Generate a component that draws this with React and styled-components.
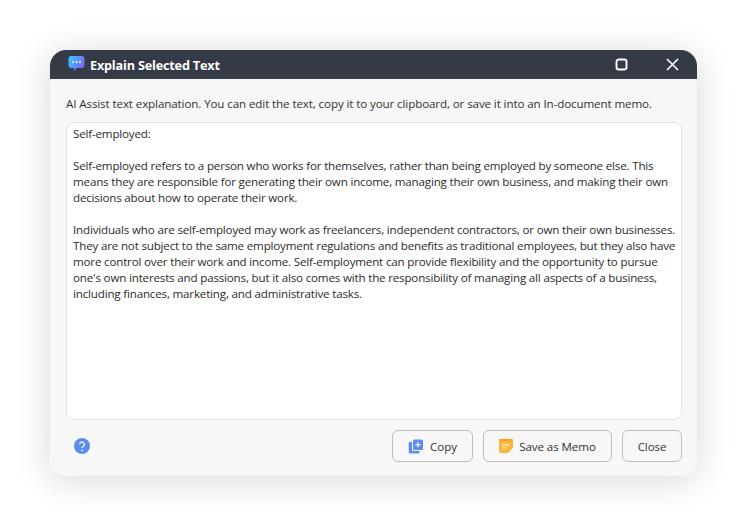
import React from 'react';
import styled, { createGlobalStyle } from 'styled-components';

const Global = createGlobalStyle`
  html, body { margin: 0; background: #fff; }
  * { box-sizing: border-box; }
`;

const Page = styled.div`
  width: 747px;
  height: 526px;
  padding: 50px;
  overflow: hidden;
  font-family: "Open Sans", "Noto Sans", sans-serif;
`;

const Dialog = styled.section`
  width: 647px;
  height: 426px;
  display: flex;
  flex-direction: column;
  background: #f7f7f7;
  border-radius: 16px;
  overflow: hidden;
  box-shadow: 0 4px 36px rgba(0, 0, 0, 0.16);
`;

const TitleBar = styled.header`
  height: 29px;
  flex: none;
  display: flex;
  align-items: center;
  padding: 0 18px;
  background: #343a46;
  color: #fff;
`;

const Title = styled.h1`
  margin: 0 0 0 5px;
  font-size: 12.7px;
  font-weight: 700;
  letter-spacing: -0.2px;
  flex: 1;
`;

const WinButton = styled.button`
  width: 14px;
  height: 14px;
  padding: 0;
  border: 0;
  background: none;
  display: flex;
  margin-left: ${p => p.$gap}px;
`;

const Body = styled.div`
  flex: 1;
  display: flex;
  flex-direction: column;
  padding: 17px 15px 14px 16px;
`;

const Hint = styled.p`
  margin: 0 0 10px;
  height: 16px;
  font-size: 11.6px;
  letter-spacing: -0.11px;
  line-height: 16px;
  color: #333;
  white-space: nowrap;
`;

const TextBox = styled.div`
  height: 298px;
  padding: 3px 6px;
  background: #fff;
  border: 1px solid #e2e2e2;
  border-radius: 8px;
  font-size: 11.6px;
  letter-spacing: -0.18px;
  line-height: 16px;
  color: #2c2c2c;
  white-space: pre;
`;

const Footer = styled.footer`
  margin-top: 10px;
  display: flex;
  align-items: center;
  gap: 10px;
`;

const Help = styled.div`
  flex: 1;
  padding-left: 7px;
  display: flex;
`;

const Button = styled.button`
  width: ${p => p.$width}px;
  height: 32px;
  display: flex;
  align-items: center;
  justify-content: center;
  gap: 6px;
  padding: 0;
  background: #f7f7f7;
  border: 1px solid #bdbdbd;
  border-radius: 6px;
  font-family: inherit;
  font-size: 11.6px;
  letter-spacing: -0.1px;
  color: #333;
`;

const text = `Self-employed:

Self-employed refers to a person who works for themselves, rather than being employed by someone else. This
means they are responsible for generating their own income, managing their own business, and making their own
decisions about how to operate their work.

Individuals who are self-employed may work as freelancers, independent contractors, or own their own businesses.
They are not subject to the same employment regulations and benefits as traditional employees, but they also have
more control over their work and income. Self-employment can provide flexibility and the opportunity to pursue
one's own interests and passions, but it also comes with the responsibility of managing all aspects of a business,
including finances, marketing, and administrative tasks.`;

const ChatIcon = () => (
  <svg width="17" height="17" viewBox="0 0 17 17">
    <defs>
      <linearGradient id="chat" x1="0" y1="0" x2="1" y2="0.6">
        <stop offset="0" stopColor="#2fd0fb" />
        <stop offset="1" stopColor="#7f63f7" />
      </linearGradient>
    </defs>
    <path d="M3.500 0h10a3 3 0 0 1 3 3v6a3 3 0 0 1-3 3H8.500l-2.600 3.200V12H3.500a3 3 0 0 1-3-3V3a3 3 0 0 1 3-3z" fill="url(#chat)" />
    <circle cx="5" cy="6" r="0.900" fill="#fff" />
    <circle cx="8.500" cy="6" r="0.900" fill="#fff" />
    <circle cx="12" cy="6" r="0.900" fill="#fff" />
  </svg>
);

const MaxIcon = () => (
  <svg width="14" height="14" viewBox="0 0 14 14">
    <rect x="2.500" y="1.500" width="10" height="10" rx="2.200" fill="none" stroke="#fff" strokeWidth="1.900" />
  </svg>
);

const CloseIcon = () => (
  <svg width="14" height="14" viewBox="0 0 14 14">
    <path d="M2 1l11 11M13 1L2 12" stroke="#fff" strokeWidth="1.600" fill="none" />
  </svg>
);

const HelpIcon = () => (
  <svg width="17" height="17" viewBox="0 0 17 17">
    <circle cx="9" cy="8" r="8" fill="#5b8def" />
    <path d="M6.700 6.300a2.300 2.300 0 1 1 3.600 1.900c-.8.500-1.200.9-1.200 1.800" fill="none" stroke="#fff" strokeWidth="1.300" />
    <circle cx="9.100" cy="12.300" r="0.850" fill="#fff" />
  </svg>
);

const CopyIcon = () => (
  <svg width="16" height="15" viewBox="0 0 15 15">
    <path d="M1.500 3h2v7.500a1.500 1.500 0 0 0 1.500 1.500h6v1.200a1.300 1.300 0 0 1-1.300 1.300H1.500A1.300 1.300 0 0 1 .2 13.200V4.300A1.300 1.300 0 0 1 1.500 3z" fill="#5b8def" />
    <rect x="4.500" y="0.500" width="10" height="10.500" rx="1.500" fill="#5b8def" />
    <path d="M9.500 3.200v5M7 5.700h5" stroke="#fff" strokeWidth="1.200" />
  </svg>
);

const MemoIcon = () => (
  <svg width="14" height="14" viewBox="0 0 14 14">
    <path d="M1.500 0h11A1.500 1.500 0 0 1 14 1.500V9l-5 5H1.500A1.500 1.500 0 0 1 0 12.500V1.500A1.500 1.500 0 0 1 1.500 0z" fill="#fdb73e" />
    <path d="M0 2.500V1.500A1.500 1.500 0 0 1 1.500 0h11A1.500 1.500 0 0 1 14 1.500v1z" fill="#f5a623" />
    <path d="M3.500 6h7M3.500 9h4" stroke="#fff" strokeWidth="1.100" />
  </svg>
);

export default function App() {
  return (
    <Page>
      <Global />
      <Dialog>
        <TitleBar>
          <ChatIcon />
          <Title>Explain Selected Text</Title>
          <WinButton><MaxIcon /></WinButton>
          <WinButton $gap={37}><CloseIcon /></WinButton>
        </TitleBar>
        <Body>
          <Hint>AI Assist text explanation. You can edit the text, copy it to your clipboard, or save it into an In-document memo.</Hint>
          <TextBox>{text}</TextBox>
          <Footer>
            <Help><HelpIcon /></Help>
            <Button $width={81}><CopyIcon />Copy</Button>
            <Button $width={129}><MemoIcon />Save as Memo</Button>
            <Button $width={60}>Close</Button>
          </Footer>
        </Body>
      </Dialog>
    </Page>
  );
}
